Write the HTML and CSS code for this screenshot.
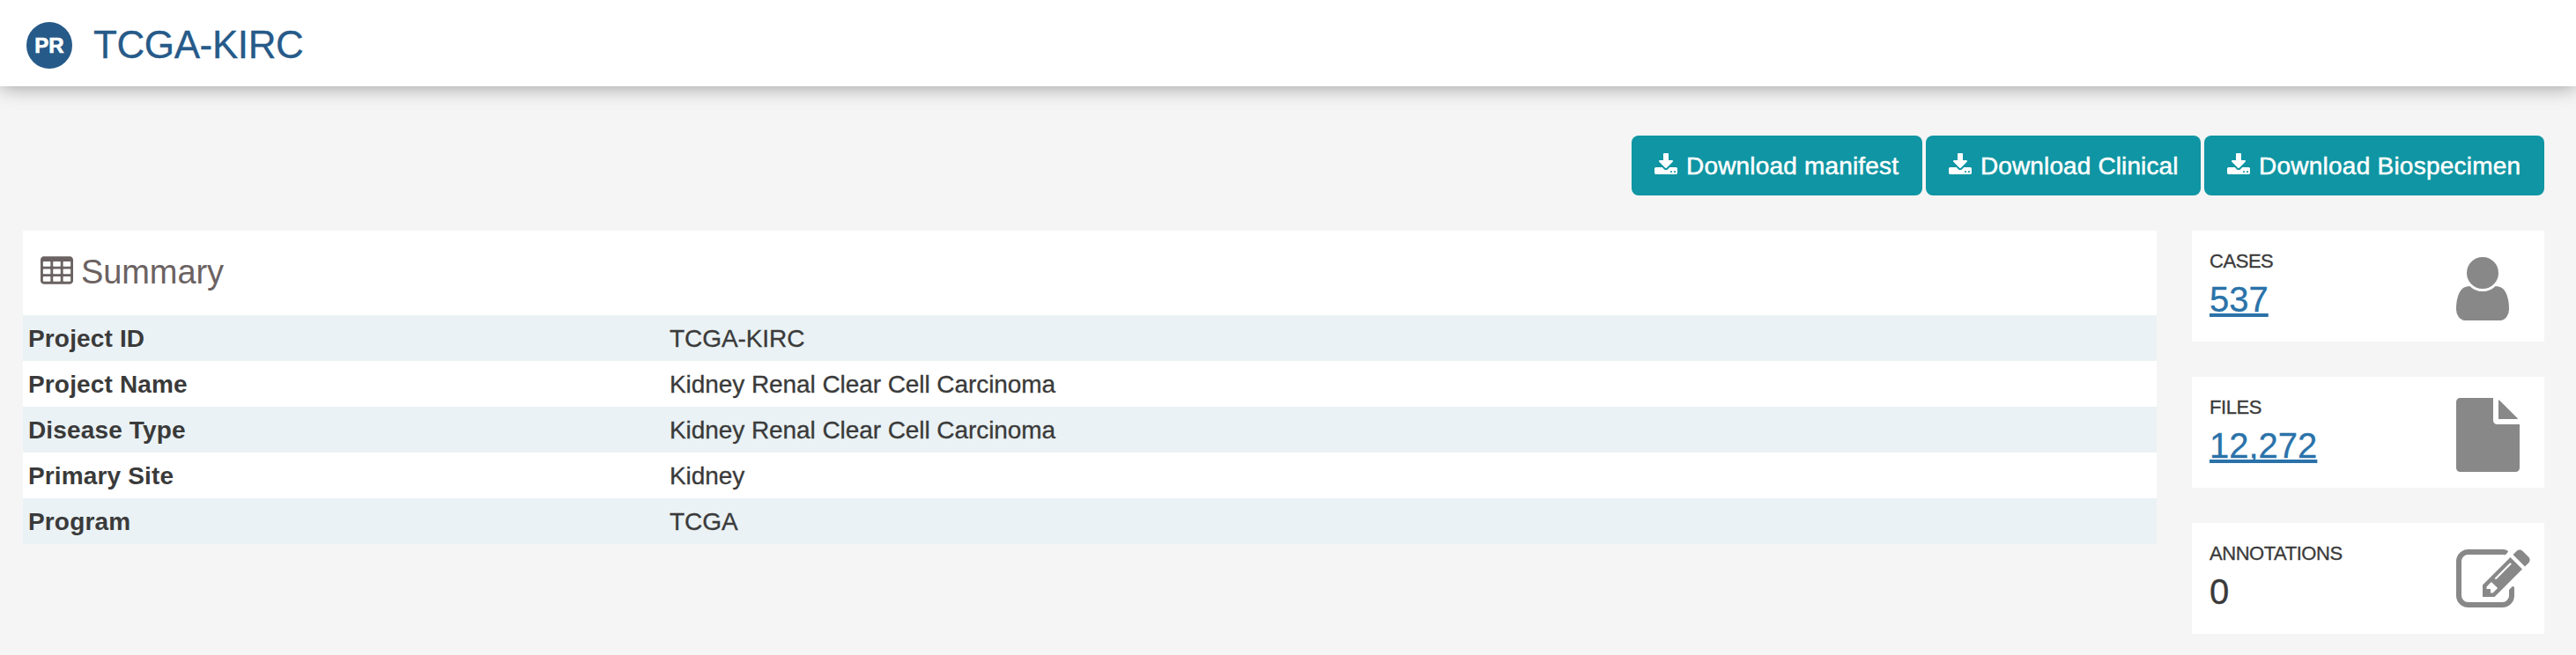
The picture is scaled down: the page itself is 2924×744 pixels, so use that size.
FILE: index.html
```html
<!DOCTYPE html>
<html lang="en">
<head>
<meta charset="utf-8">
<title>TCGA-KIRC</title>
<link rel="stylesheet" href="styles.css">
</head>
<body>
<svg class="sprite" aria-hidden="true">
  <symbol id="download" viewBox="64 0 1664 1792"><path d="M1344 1344q0-26-19-45t-45-19-45 19-19 45 19 45 45 19 45-19 19-45zm256 0q0-26-19-45t-45-19-45 19-19 45 19 45 45 19 45-19 19-45zm128-224v320q0 40-28 68t-68 28h-1472q-40 0-68-28t-28-68v-320q0-40 28-68t68-28h465l135 136q58 56 136 56t136-56l136-136h464q40 0 68 28t28 68zm-325-569q17 41-14 70l-448 448q-18 19-45 19t-45-19l-448-448q-31-29-14-70 17-39 59-39h256v-448q0-26 19-45t45-19h256q26 0 45 19t19 45v448h256q42 0 59 39z"/></symbol>
</svg>
<header class="header">
  <span class="badge">PR</span>
  <h1 class="title">TCGA-KIRC</h1>
</header>
<main class="main">
  <div class="actions">
    <button class="button manifest"><svg class="button-icon"><use href="#download"/></svg>Download manifest</button>
    <button class="button clinical"><svg class="button-icon"><use href="#download"/></svg>Download Clinical</button>
    <button class="button biospecimen"><svg class="button-icon"><use href="#download"/></svg>Download Biospecimen</button>
  </div>
  <div class="content">
    <section class="summary">
      <h2 class="summary-title">
        <svg class="summary-icon" viewBox="0 0 1664 1408"><path fill-rule="evenodd" d="M160 0h1344q66 0 113 47t47 113v1088q0 66-47 113t-113 47h-1344q-66 0-113-47t-47-113v-1088q0-66 47-113t113-47zM160 256q-32 0-32 32v192q0 32 32 32h320q32 0 32-32v-192q0-32-32-32zM672 256q-32 0-32 32v192q0 32 32 32h320q32 0 32-32v-192q0-32-32-32zM1184 256q-32 0-32 32v192q0 32 32 32h320q32 0 32-32v-192q0-32-32-32zM160 640q-32 0-32 32v192q0 32 32 32h320q32 0 32-32v-192q0-32-32-32zM672 640q-32 0-32 32v192q0 32 32 32h320q32 0 32-32v-192q0-32-32-32zM1184 640q-32 0-32 32v192q0 32 32 32h320q32 0 32-32v-192q0-32-32-32zM160 1024q-32 0-32 32v192q0 32 32 32h320q32 0 32-32v-192q0-32-32-32zM672 1024q-32 0-32 32v192q0 32 32 32h320q32 0 32-32v-192q0-32-32-32zM1184 1024q-32 0-32 32v192q0 32 32 32h320q32 0 32-32v-192q0-32-32-32z"/></svg>
        <span class="summary-text">Summary</span>
      </h2>
      <dl class="rows">
        <div class="row"><dt class="term">Project ID</dt><dd class="value">TCGA-KIRC</dd></div>
        <div class="row"><dt class="term">Project Name</dt><dd class="value">Kidney Renal Clear Cell Carcinoma</dd></div>
        <div class="row"><dt class="term">Disease Type</dt><dd class="value">Kidney Renal Clear Cell Carcinoma</dd></div>
        <div class="row"><dt class="term">Primary Site</dt><dd class="value">Kidney</dd></div>
        <div class="row"><dt class="term">Program</dt><dd class="value">TCGA</dd></div>
      </dl>
    </section>
    <aside class="counts">
      <div class="card">
        <div class="card-text"><div class="label">CASES</div><a class="count link" href="#">537</a></div>
        <svg class="card-icon" viewBox="256 0 1792 1792"><path d="M1536 1399q0 109-62.500 187t-150.500 78h-854q-88 0-150.500-78t-62.500-187q0-85 8.500-160.500t31.500-152 58.500-131 94-89 134.500-34.500q131 128 313 128t313-128q76 0 134.500 34.500t94 89 58.500 131 31.500 152 8.500 160.500zm-256-887q0 159-112.500 271.500t-271.500 112.500-271.500-112.500-112.500-271.500 112.500-271.500 271.500-112.500 271.500 112.500 112.500 271.500z"/></svg>
      </div>
      <div class="card">
        <div class="card-text"><div class="label">FILES</div><a class="count link" href="#">12,272</a></div>
        <svg class="card-icon" viewBox="128 0 1792 1792"><path d="M1152 512v-472q22 14 36 28l408 408q14 14 28 36h-472zm-128 32q0 40 28 68t68 28h544v1056q0 40-28 68t-68 28h-1344q-40 0-68-28t-28-68v-1600q0-40 28-68t68-28h800v544z"/></svg>
      </div>
      <div class="card">
        <div class="card-text"><div class="label">ANNOTATIONS</div><span class="count">0</span></div>
        <svg class="card-icon" viewBox="0 0 1792 1792"><path d="M888 1184l116-116-152-152-116 116v56h96v96h56zm440-720q-16-16-33 1l-350 350q-17 17-1 33t33-1l350-350q17-17 1-33zm80 594v190q0 119-84.500 203.500t-203.500 84.500h-832q-119 0-203.500-84.500t-84.500-203.500v-832q0-119 84.500-203.500t203.500-84.500h832q63 0 117 25 15 7 18 23 3 17-9 29l-49 49q-14 14-32 8-23-6-45-6h-832q-66 0-113 47t-47 113v832q0 66 47 113t113 47h832q66 0 113-47t47-113v-126q0-13 9-22l64-64q15-15 35-7t20 29zm-96-738l288 288-672 672h-288v-288zm444 132l-92 92-288-288 92-92q28-28 68-28t68 28l152 152q28 28 28 68t-28 68z"/></svg>
      </div>
    </aside>
  </div>
</main>
</body>
</html>
```
FILE: styles.css
```css
* { box-sizing: border-box; }
body {
  margin: 0;
  height: 744px;
  overflow: hidden;
  background: #f5f5f5;
  color: #3a3a3a;
  font: 28px/40px "Liberation Sans", Arial, sans-serif;
}
svg { display: block; fill: currentColor; flex: none; }
.sprite { display: none; }
.header {
  display: flex;
  align-items: center;
  gap: 24px;
  height: 98px;
  padding: 4px 30px 0;
  background: #fff;
  color: #265a89;
  box-shadow: 0 0 22px rgba(0, 0, 0, .4);
}
.badge {
  display: flex;
  align-items: center;
  justify-content: center;
  width: 52px;
  height: 53px;
  padding-top: 2px;
  border-radius: 50%;
  background: #265a89;
  color: #fff;
  font-size: 24px;
  font-weight: bold;
  -webkit-text-stroke: .7px #fff;
}
.title {
  margin: 0;
  font-size: 44px;
  font-weight: 400;
  line-height: 52px;
  letter-spacing: -.4px;
  -webkit-text-stroke: .3px;
}
.main { padding: 56px 36px 0 26px; }
.actions { display: flex; justify-content: flex-end; gap: 4px; }
.button {
  display: flex;
  align-items: center;
  gap: 10px;
  height: 68px;
  padding: 2px 0 0 26px;
  border: 0;
  border-radius: 8px;
  background: #0f95a3;
  color: #fff;
  font: inherit;
  white-space: nowrap;
  -webkit-text-stroke: .5px #fff;
}
.manifest { width: 330px; letter-spacing: .18px; }
.clinical { width: 312px; letter-spacing: .12px; }
.biospecimen { width: 386px; letter-spacing: .24px; }
.button-icon { width: 26px; height: 28px; margin-bottom: 2px; stroke: none; }
.content {
  display: grid;
  grid-template-columns: 1fr 400px;
  gap: 40px;
  align-items: start;
  margin-top: 40px;
}
.summary { background: #fff; }
.summary-title {
  display: flex;
  align-items: center;
  gap: 9px;
  height: 96px;
  margin: 0;
  padding: 0 20px 7px;
  color: #6b6262;
  font-size: 38px;
  font-weight: 400;
}
.summary-icon { width: 37px; height: 32px; }
.summary-text { padding-top: 4px; letter-spacing: -.1px; }
.rows { margin: 0; }
.row { display: flex; height: 52px; padding: 7px 6px 5px; }
.row:nth-child(odd) { background: #eaf2f5; }
.term { width: 728px; font-weight: bold; letter-spacing: .15px; }
.value { margin: 0; letter-spacing: -.07px; -webkit-text-stroke: .3px; }
.counts { display: grid; gap: 40px; }
.card {
  display: flex;
  justify-content: space-between;
  height: 126px;
  padding: 20px 16px 0 20px;
  background: #fff;
}
.label { font-size: 22px; line-height: 30px; letter-spacing: -.45px; -webkit-text-stroke: .3px; }
.count { display: block; font-size: 40px; line-height: 56px; -webkit-text-stroke: .3px; }
.link {
  width: fit-content;
  color: #2a72a9;
  text-decoration: underline;
  text-decoration-thickness: 4px;
  text-underline-offset: 2px;
  text-decoration-skip-ink: none;
}
.card-icon { width: 84px; height: 84px; margin-top: 4px; color: #888; }
```
